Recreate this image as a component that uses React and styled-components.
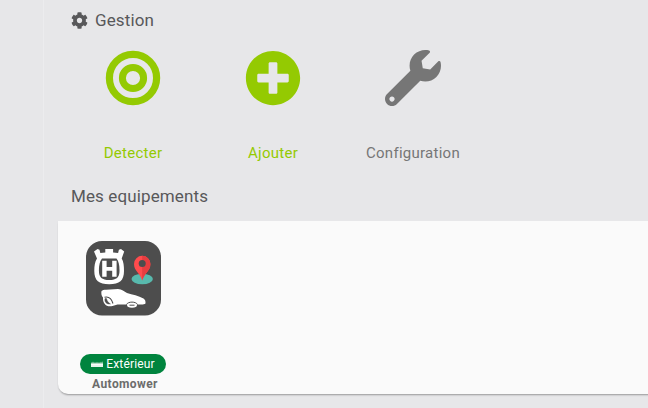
import React from 'react';
import styled, { createGlobalStyle } from 'styled-components';
import { FaCog, FaPlusCircle, FaWrench } from 'react-icons/fa';

const GlobalStyle = createGlobalStyle`
  * { box-sizing: border-box; }
  body {
    margin: 0;
    background: #e7e7e9;
    font-family: Roboto, sans-serif;
    overflow: hidden;
  }
`;

const Page = styled.div`
  display: flex;
  width: 100vw;
  height: 100vh;
  overflow: hidden;
`;

const Sidebar = styled.aside`
  flex: 0 0 44px;
  border-right: 1px solid #ececee;
`;

const Content = styled.main`
  flex: 1;
  min-width: 0;
  padding-left: 14px;
`;

const Legend = styled.h2`
  display: flex;
  align-items: center;
  gap: 7px;
  height: 40px;
  margin: 0;
  padding-left: 13px;
  color: #58585a;
  font-size: 17px;
  font-weight: 400;
  letter-spacing: 0.12px;
`;

const Actions = styled.div`
  display: flex;
  gap: 20px;
  height: 136px;
  padding: 10px 0 0 15px;
`;

const Action = styled.button`
  display: flex;
  flex-direction: column;
  align-items: center;
  width: 120px;
  padding: 0;
  border: 0;
  background: none;
  color: ${(p) => (p.$accent ? '#94ca02' : '#767676')};
  font: 400 15px/20px Roboto, sans-serif;
  letter-spacing: 0.27px;

  svg { display: block; flex: none; }
`;

const ActionLabel = styled.span`
  margin-top: 37px;
  white-space: nowrap;
`;

const EquipmentPanel = styled.section`
  height: 173px;
  margin-top: 5px;
  margin-right: -12px;
  padding: 20px 0 0 10px;
  border-radius: 0 0 10px 10px;
  background: #fafafa;
  box-shadow: 0 2px 2px -1px rgba(0, 0, 0, 0.3), 0 1px 2px rgba(0, 0, 0, 0.06);
`;

const Equipment = styled.article`
  display: flex;
  flex-direction: column;
  align-items: center;
  width: 110px;

  > svg { display: block; }
`;

const Tag = styled.span`
  display: flex;
  align-items: center;
  justify-content: center;
  gap: 3px;
  width: 86px;
  height: 20px;
  margin-top: 37px;
  border-radius: 10px;
  background: #00843e;
  color: #fff;
  font-size: 12px;
  line-height: 20px;
  letter-spacing: 0.16px;
`;

const EquipmentName = styled.strong`
  margin-top: 2px;
  padding-left: 4px;
  color: #6c6c6c;
  font-size: 12px;
  font-weight: 700;
  line-height: 16px;
  letter-spacing: 0.4px;
`;

const TargetIcon = () => (
  <svg width="56" height="56" viewBox="0 0 56 56" fill="none" stroke="currentColor">
    <circle cx="28" cy="28" r="23.6" strokeWidth="7.2" />
    <circle cx="28" cy="28" r="10.6" strokeWidth="7" />
  </svg>
);

const GrassIcon = () => (
  <svg width="12" height="7" viewBox="0 0 12 7">
    <path d="M0 4V1l1 1.500L2 .5l1 2L4 1l1 1.500L6 .8l1 1.700L8 1l1 1.500L10 .5l1 2L12 0v4Z" fill="#fff" opacity=".75" />
    <path d="M0 3h12v3H0Z" fill="#fff" opacity=".9" />
  </svg>
);

const MowerLogo = () => (
  <svg width="76" height="76" viewBox="-1 0 76 76">
    <rect width="75" height="74.5" rx="16" fill="#4d4d4d" />
    {/* crowned shield */}
    <path
      d="M8 10.500 11.500 8 13.500 8.700 14.300 12 19.300 11.500V8h7.800v3.500l5 .5.800-3.300L35 8l3.200 2.500L35.700 17.500C37.600 20.500 38 25 38 30c0 9.500-4.500 13.300-14.800 13.300S8.300 39.500 8.300 30c0-5 .6-9.500 2.700-12.500Z"
      fill="#fff"
    />
    <path
      d="M16 17.500h14.500c2.200 2.500 3 6.500 3 12 0 7-3 9.500-10.300 9.500s-10.300-2.500-10.300-9.500c0-5.500.9-9.500 3.100-12Z"
      fill="#4d4d4d"
    />
    <path d="M16.200 19.700h4.400v6.400h5.600v-6.400h4.400v16h-4.400v-6h-5.600v6h-4.400Z" fill="#fff" />
    {/* map pin */}
    <ellipse cx="56.200" cy="38" rx="10.700" ry="5.200" fill="#58b9ad" />
    <path d="M56.200 39.500C54 32 48 30 48 23a8.200 8.200 0 0 1 16.400 0c0 7-6 9-8.200 16.500Z" fill="#ff4b4d" />
    <path d="M56.200 14.800a8.200 8.200 0 0 1 8.200 8.200c0 7-6 9-8.200 16.500Z" fill="#e73d40" />
    <circle cx="56.200" cy="22.500" r="3.500" fill="#4d4d4d" />
    {/* robotic mower */}
    <path
      d="M15.500 50c1-1 2.500-1.300 4.500-1.300l12-.7c4 .3 6 2.200 9 4 5.500 1.600 11.500 2.800 16.500 5.600 1.600 1 2.300 2.900 2 4.800-1 .8-2.300 1.100-4 1.100h-24l-5 1.500c-6 1.500-10-2.500-9.500-8.500-1.500-1.500-2-4-1.500-6.500Z"
      fill="#fff"
    />
    <path d="M18.500 56.200c4-1 7 1.200 8.500 6.300" fill="none" stroke="#4d4d4d" strokeWidth="1.100" />
    <path d="M19 57.500c-.8 3.500 1.700 6 5.500 5.500-2-1-3.500-3-4-5.500Z" fill="#4d4d4d" stroke="#4d4d4d" strokeWidth=".4" />
    <ellipse cx="46" cy="64" rx="5" ry="2.800" fill="#fff" />
    <path d="M40.500 63.500c1.500-3.200 9.500-3.200 11 0" fill="none" stroke="#4d4d4d" strokeWidth="1" />
    <path d="M43.500 64.200h5" stroke="#4d4d4d" strokeWidth="1" />
  </svg>
);

export default function App() {
  return (
    <Page>
      <GlobalStyle />
      <Sidebar />
      <Content>
        <Legend>
          <FaCog size={17} />
          Gestion
        </Legend>
        <Actions>
          <Action $accent>
            <TargetIcon />
            <ActionLabel>Detecter</ActionLabel>
          </Action>
          <Action $accent>
            <FaPlusCircle size={56} />
            <ActionLabel>Ajouter</ActionLabel>
          </Action>
          <Action>
            <FaWrench size={56} />
            <ActionLabel>Configuration</ActionLabel>
          </Action>
        </Actions>
        <Legend>Mes equipements</Legend>
        <EquipmentPanel>
          <Equipment>
            <MowerLogo />
            <Tag>
              <GrassIcon />
              Extérieur
            </Tag>
            <EquipmentName>Automower</EquipmentName>
          </Equipment>
        </EquipmentPanel>
      </Content>
    </Page>
  );
}
